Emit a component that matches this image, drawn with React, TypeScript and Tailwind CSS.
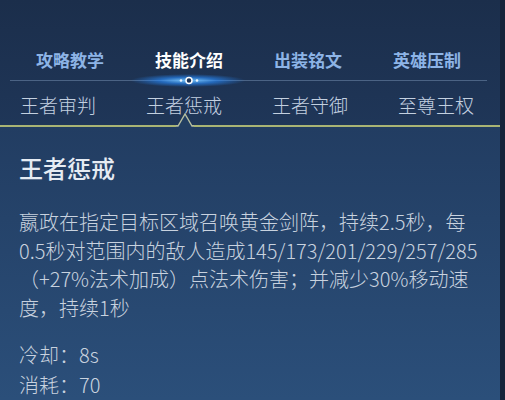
import { useState } from "react";

const guideTabs = ["攻略教学", "技能介绍", "出装铭文", "英雄压制"];
const skills = ["王者审判", "王者惩戒", "王者守御", "至尊王权"];

const descLines = [
  "嬴政在指定目标区域召唤黄金剑阵，持续2.5秒，每",
  "0.5秒对范围内的敌人造成145/173/201/229/257/285",
  "（+27%法术加成）点法术伤害；并减少30%移动速",
  "度，持续1秒",
];

export default function App() {
  const [activeTab, setActiveTab] = useState(1);
  const [activeSkill, setActiveSkill] = useState(1);

  return (
    <div className="flex h-[400px] w-[505px] overflow-hidden bg-[#1c3050] font-['Noto_Sans_CJK_SC','Noto_Sans',sans-serif]">
      <div className="flex flex-1 flex-col">
        {/* header with guide tabs and skill tabs */}
        <div className="relative h-[136px] bg-gradient-to-b from-[#1b2e4b] to-[#1f3658]">
          <div className="flex gap-[51px] pl-[36px] pt-[50px]">
            {guideTabs.map((tab, i) => (
              <button
                key={tab}
                type="button"
                onClick={() => setActiveTab(i)}
                className={`text-[17px] font-bold leading-[20px] ${i === activeTab ? "text-white" : "text-[#8db4e6]"}`}
              >
                {tab}
              </button>
            ))}
          </div>

          <div className="relative ml-[10px] mr-[13px] mt-[10px] h-px bg-[#4b6384]">
            <div className="absolute left-[120px] top-[-6px] h-[13px] w-[116px] rounded-full bg-[radial-gradient(ellipse_at_center,rgba(120,200,255,0.95)_0%,rgba(40,140,255,0.6)_35%,rgba(30,100,220,0)_70%)]" />
            <svg className="absolute left-[165px] top-[-5px]" width="28" height="11" viewBox="0 0 28 11">
              <circle cx="14" cy="5.5" r="3" fill="#1d3456" stroke="#ffffff" strokeWidth="1.5" />
              <circle cx="6" cy="5.5" r="1.3" fill="#e8f4ff" />
              <circle cx="22" cy="5.5" r="1.3" fill="#e8f4ff" />
            </svg>
          </div>

          <div className="mt-[12px] flex gap-[50px] pl-[20px]">
            {skills.map((skill, i) => (
              <button
                key={skill}
                type="button"
                onClick={() => setActiveSkill(i)}
                className="text-[19px] font-light leading-[24px] text-[#c3d0e0]"
              >
                {skill}
              </button>
            ))}
          </div>
        </div>

        {/* divider with caret under the active skill */}
        <div className="relative h-[2px] bg-[#a9b474]">
          <svg className="absolute left-[176px] top-[-12px]" width="18" height="14" viewBox="0 0 18 14">
            <path d="M0 13 L2 13 L9 1 L16 13 L18 13 L18 14 L0 14 Z" fill="#223e62" />
            <path d="M0 13 H2 L9 1 L16 13 H18" fill="none" stroke="#b7bfa0" strokeWidth="1.4" />
          </svg>
        </div>

        {/* skill details */}
        <div className="flex-1 bg-gradient-to-b from-[#223d62] to-[#2b4f7a] px-[19px] pt-[26px] text-[#c8d2df]">
          <h2 className="text-[24px] font-medium leading-[30px] text-[#e6ecf3]">{skills[activeSkill]}</h2>
          <div className="mt-[25px] text-[20px] font-light leading-[28.5px]">
            {descLines.map((line) => (
              <p key={line} className="whitespace-nowrap">
                {line}
              </p>
            ))}
          </div>
          <div className="mt-[18px] text-[20px] font-light leading-[30px]">
            <p>冷却：8s</p>
            <p>消耗：70</p>
          </div>
        </div>
      </div>
      <div className="w-[5px] bg-[#16243a]" />
    </div>
  );
}
